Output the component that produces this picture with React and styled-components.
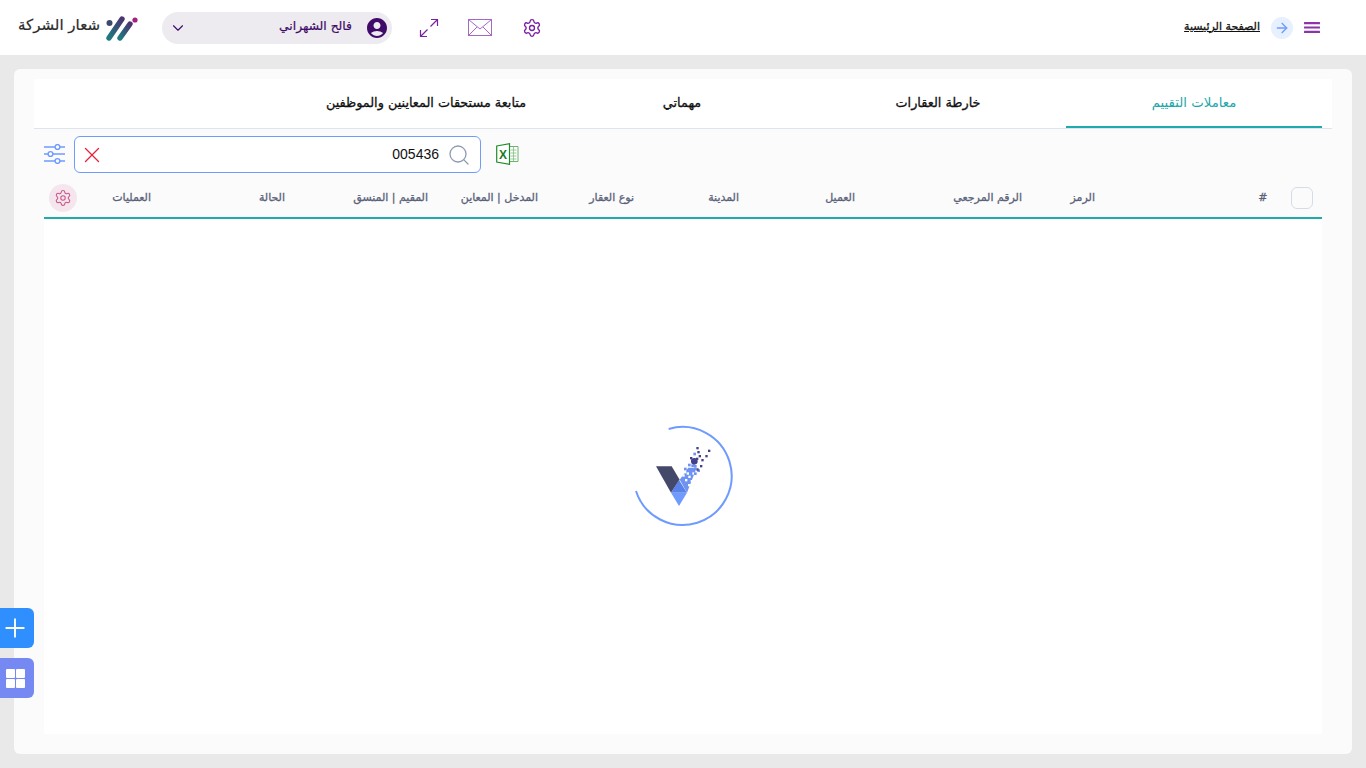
import React from "react";
import styled, { createGlobalStyle } from "styled-components";
import { Settings, ChevronDown, ArrowRight, Search, X, Plus } from "lucide-react";
import { MdAccountCircle } from "react-icons/md";

const Global = createGlobalStyle`
  html, body { margin: 0; padding: 0; height: 100%; overflow: hidden; }
  body { background: #e9e9e9; font-family: "DejaVu Sans", "Noto Sans", sans-serif; }
  * { box-sizing: border-box; }
`;

const Page = styled.div`
  width: 1366px; height: 768px; display: flex; flex-direction: column; position: relative;
`;
const Header = styled.header`
  height: 55px; background: #fff; display: flex; align-items: center; justify-content: space-between;
  padding: 0 46px 0 18px; flex: none;
`;
const HeaderGroup = styled.div`
  display: flex; align-items: center;
`;
const BrandRow = styled.div`
  display: flex; align-items: center; gap: 5px; width: 120px; height: 32px; margin-right: 24px;
`;
const BrandText = styled.span`
  font-size: 15px; color: #2b2b2b; white-space: nowrap; width: 82px; letter-spacing: -0.6px; text-align: center; -webkit-text-stroke: .2px #2b2b2b; margin-top: -6px;
`;
const UserPill = styled.div`
  width: 230px; height: 32px; border-radius: 16px; background: #edebef; display: flex; align-items: center;
  justify-content: space-between; padding: 0 3px 0 7px; color: #3f0a68; margin-right: 27px;
`;
const UserInfo = styled.div`
  display: flex; align-items: center; gap: 13px;
`;
const UserName = styled.span`
  font-size: 12.3px; color: #3f0a68; letter-spacing: -0.5px; -webkit-text-stroke: .2px #3f0a68; margin-top: -3px;
`;
const IconSlot = styled.div`
  width: ${p => p.$w}px; margin-left: ${p => p.$ml || 0}px; display: flex; justify-content: center; color: #7a1fa2;
`;
const HomeLink = styled.a`
  font-size: 11px; color: #111; text-decoration: underline; letter-spacing: -0.5px; -webkit-text-stroke: .3px #111; margin-right: 11px; margin-top: -3px;
`;
const ArrowCircle = styled.div`
  width: 22px; height: 22px; border-radius: 50%; background: #e6f0ff; color: #6f9bff; display: flex; align-items: center; justify-content: center;
`;
const Card = styled.main`
  margin: 14px; flex: 1; background: #fbfbfc; border-radius: 6px; padding: 10px 20px 20px; display: flex; flex-direction: column;
`;
const Tabs = styled.nav`
  height: 50px; background: #fff; border-bottom: 1px solid #dfe3ee; display: flex; padding: 0 10px; flex: none;
`;
const Tab = styled.div`
  width: 256px; height: 49px; display: flex; align-items: center; justify-content: center; padding-bottom: 1px; letter-spacing: -0.5px;
  font-size: ${p => (p.$active ? "13.3px" : "12.8px")};
  color: ${p => (p.$active ? "#1ea7ab" : "#111")};
  border-bottom: 2px solid ${p => (p.$active ? "#1fabac" : "transparent")};
  -webkit-text-stroke: ${p => (p.$active ? "0" : ".3px #111")};
`;
const Toolbar = styled.div`
  height: 37px; margin-top: 7px; display: flex; align-items: center; padding: 0 10px 2px; flex: none;
`;
const ExcelSlot = styled.div`
  margin-left: 15px; display: flex; justify-content: center;
`;
const SearchBox = styled.div`
  width: 407px; height: 37px; margin-bottom: -2px; background: #fff; border: 1px solid #6f9bff; border-radius: 6px; display: flex; align-items: center; padding: 0 9px 0 4px; margin-left: 9px;
`;
const SearchValue = styled.span`
  font-family: "Liberation Sans", sans-serif; font-size: 14px; color: #111; flex: 1; text-align: right; margin-right: 8px; margin-top: -1px;
`;
const TableArea = styled.section`
  flex: 1; display: flex; flex-direction: column; margin: 7px 10px 0;
`;
const HeadRow = styled.div`
  height: 39px; display: grid; align-items: center; flex: none; border-bottom: 2px solid #1fabac; padding-bottom: 2px;
  grid-template-columns: 55px 172px 73px 167px 116px 105px 96px 110px 143px 134px 74px 1fr;
`;
const HeadCell = styled.div`
  font-size: 11px; color: #5a6278; letter-spacing: -0.5px; white-space: nowrap; -webkit-text-stroke: .3px #5a6278; margin-top: -1px;
`;
const CheckBox = styled.div`
  width: 22px; height: 22px; margin-right: 9px; border: 1px solid #d5dce8; border-radius: 6px; background: #fbfbfc;
`;
const GearBadge = styled.div`
  width: 28px; height: 28px; border-radius: 50%; background: #f5e6ee; color: #c8558a; display: flex; align-items: center; justify-content: center;
`;
const TableBody = styled.div`
  flex: 1; background: #fff; display: flex; align-items: center; justify-content: center;
`;
const FloatStack = styled.div`
  position: absolute; left: 0; top: 608px; display: flex; flex-direction: column; gap: 10px;
`;
const FloatButton = styled.div`
  width: 34px; height: 40px; background: ${p => p.$bg}; color: #fff; border-radius: 0 6px 6px 0; display: flex; align-items: center; justify-content: center; padding-right: 4px;
`;
const TileGrid = styled.div`
  display: grid; grid-template-columns: 9px 9px; grid-auto-rows: 9px; gap: 1px;
`;
const Tile = styled.span`
  background: #fff; border-radius: 1px;
`;

const LogoMark = () => (
  <svg width="34" height="26" viewBox="0 0 34 26" style={{ flex: "none" }}>
    <defs>
      <linearGradient id="lg" x1="0" y1="1" x2="1" y2="0">
        <stop offset="0" stopColor="#1f7a80" />
        <stop offset="1" stopColor="#4a3570" />
      </linearGradient>
    </defs>
    <circle cx="4.5" cy="8" r="3" fill="#3d4a6b" />
    <path d="M4 23 L17 4" stroke="url(#lg)" strokeWidth="5.4" strokeLinecap="round" />
    <path d="M15 23 L25 9" stroke="url(#lg)" strokeWidth="5.4" strokeLinecap="round" />
    <circle cx="30" cy="5" r="2.6" fill="#a3217f" />
  </svg>
);
const ExpandIcon = () => (
  <svg width="20" height="20" viewBox="0 0 20 20" fill="none" stroke="#7a1fa2" strokeWidth="1.2">
    <path d="M12 1.5h6.5V8M18.5 1.5L11.5 8.5M8 18.5H1.5V12M1.5 18.5L8.5 11.5" />
  </svg>
);
const MailIcon = () => (
  <svg width="24" height="17" viewBox="0 0 24 17" fill="none" stroke="#a569c4" strokeWidth="1">
    <rect x=".5" y=".5" width="23" height="16" />
    <path d="M.5 .5L12 10 23.5 .5M.5 16.5L9 8M23.5 16.5L15 8" />
  </svg>
);
const MenuIcon = () => (
  <svg width="16" height="11" viewBox="0 0 16 11" fill="#8a35a8">
    <rect width="16" height="2.2" rx=".5" /><rect y="4.4" width="16" height="2.2" rx=".5" /><rect y="8.8" width="16" height="2.2" rx=".5" />
  </svg>
);
const SlidersIcon = () => (
  <svg width="21" height="20" viewBox="0 0 21 20" fill="none" stroke="#6f9bff" strokeWidth="1.4">
    <path d="M0 3h11M16 3h5M0 10h4M9 10h12M0 17h11M16 17h5" />
    <circle cx="13.5" cy="3" r="2.4" /><circle cx="6.5" cy="10" r="2.4" /><circle cx="13.5" cy="17" r="2.4" />
  </svg>
);
const ExcelIcon = () => (
  <svg width="23" height="22" viewBox="0 0 23 22">
    <path d="M13 3.5h9v15h-9" fill="#fff" stroke="#6cb36c" strokeWidth="1" />
    <path d="M14.5 7h6M14.5 10h6M14.5 13h6M14.5 16h6M17.5 4v14" stroke="#7fbf7f" strokeWidth=".8" />
    <path d="M.7 3L13.5.7v20.6L.7 19z" fill="#fff" stroke="#1f8a2a" strokeWidth="1.2" />
    <text x="3" y="15.5" fontFamily="Liberation Sans" fontWeight="700" fontSize="12" fill="#1a7a24">X</text>
  </svg>
);
const whites = [[205,182],[195,192],[212,195],[204,207],[217,172],[187,178],[192,168],[222,184],[200,172]];
const blues = [[204,146],[222,172],[232,163],[220,113],[192,158],[212,160],[222,150],[202,162],[214,148]];
const darks = [[215,133],[229,96],[232,108],[236,120],[264,104],[256,120],[244,132],[229,160],[210,126],[240,150],[228,128]];
const Loader = () => (
  <svg width="125" height="125" viewBox="3 -3 375 375">
    <path d="M146 42 A147 147 0 1 1 48 228" fill="none" stroke="#6f9bff" strokeWidth="6" />
    <path d="M108 154h47l24 40-26 39z" fill="#44496a" />
    <path d="M153 233l24-38 24 38z" fill="#5a82e8" />
    <path d="M153 233h48l-24 40z" fill="#6f9bff" />
    <path d="M179 194l26-36h25l-29 75z" fill="#6f93f0" />
    {whites.map(([x,y],i)=>(<rect key={i} x={x} y={y} width="7" height="7" fill="#fff" />))}
    {blues.map(([x,y],i)=>(<rect key={i} x={x} y={y} width="8" height="8" fill="#6f93f0" />))}
    {darks.map(([x,y],i)=>(<rect key={i} x={x} y={y} width="7" height="7" fill="#44408a" />))}
    <circle cx="223" cy="139" r="10" fill="#44408a" />
  </svg>
);

const heads = ["#", "الرمز", "الرقم المرجعي", "العميل", "المدينة", "نوع العقار", "المدخل | المعاين", "المقيم | المنسق", "الحالة", "العمليات"];

export default function App() {
  return (
    <>
      <Global />
      <Page>
        <Header dir="ltr">
          <HeaderGroup>
            <BrandRow>
              <BrandText dir="rtl">شعار الشركة</BrandText>
              <LogoMark />
            </BrandRow>
            <UserPill>
              <ChevronDown size={18} strokeWidth={1.5} />
              <UserInfo>
                <UserName dir="rtl">فالح الشهراني</UserName>
                <MdAccountCircle size={24} />
              </UserInfo>
            </UserPill>
            <IconSlot $w={20}><ExpandIcon /></IconSlot>
            <IconSlot $w={24} $ml={29}><MailIcon /></IconSlot>
            <IconSlot $w={20} $ml={30}><Settings size={20} strokeWidth={1.6} /></IconSlot>
          </HeaderGroup>
          <HeaderGroup>
            <HomeLink dir="rtl">الصفحة الرئيسية</HomeLink>
            <ArrowCircle><ArrowRight size={16} strokeWidth={2} /></ArrowCircle>
            <IconSlot $w={16} $ml={11}><MenuIcon /></IconSlot>
          </HeaderGroup>
        </Header>
        <Card dir="rtl">
          <Tabs>
            <Tab $active>معاملات التقييم</Tab>
            <Tab>خارطة العقارات</Tab>
            <Tab>مهماتي</Tab>
            <Tab>متابعة مستحقات المعاينين والموظفين</Tab>
          </Tabs>
          <Toolbar dir="ltr">
            <SlidersIcon />
            <SearchBox>
              <X size={26} strokeWidth={1.2} color="#e8203f" />
              <SearchValue>005436</SearchValue>
              <Search size={24} strokeWidth={1.3} color="#8d9bb0" />
            </SearchBox>
            <ExcelSlot><ExcelIcon /></ExcelSlot>
          </Toolbar>
          <TableArea>
            <HeadRow>
              <CheckBox />
              {heads.map(h => <HeadCell key={h}>{h}</HeadCell>)}
              <GearBadge><Settings size={18} strokeWidth={1.4} /></GearBadge>
            </HeadRow>
            <TableBody><Loader /></TableBody>
          </TableArea>
        </Card>
        <FloatStack>
          <FloatButton $bg="#2f8fff"><Plus size={30} strokeWidth={1.5} /></FloatButton>
          <FloatButton $bg="#7688f2">
            <TileGrid><Tile /><Tile /><Tile /><Tile /></TileGrid>
          </FloatButton>
        </FloatStack>
      </Page>
    </>
  );
}
